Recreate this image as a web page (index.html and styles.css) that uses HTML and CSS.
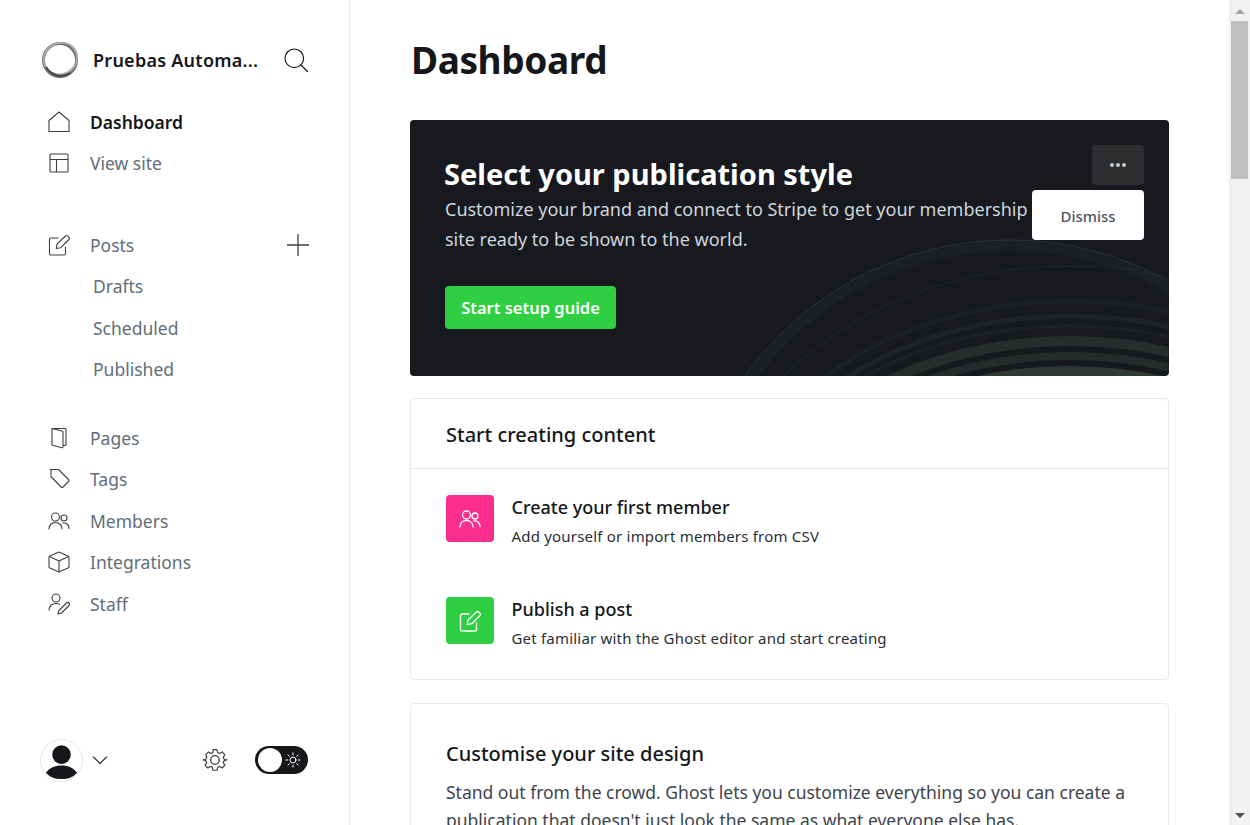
FILE: index.html
```html
<!DOCTYPE html>
<html lang="en">
<head>
<meta charset="utf-8">
<title>Dashboard</title>
<link rel="stylesheet" href="styles.css">
</head>
<body>
<div class="app">
  <aside class="sidebar">
    <div class="brand">
      <svg class="logo" viewBox="0 0 40 40" fill="none">
        <circle cx="20" cy="20" r="16.5" stroke="#6f6f6f" stroke-width="3"/>
        <ellipse cx="21" cy="19" rx="17" ry="15.5" stroke="#a9a9a9" stroke-width="2" transform="rotate(-30 20 20)"/>
        <path d="M6 27a17 17 0 0 0 24 6" stroke="#444" stroke-width="2"/>
      </svg>
      <span class="brand-name">Pruebas Automa...</span>
      <svg class="search" viewBox="0 0 24 24" fill="none" stroke="#15171a" stroke-width="1.2" stroke-linecap="round"><circle cx="10.3" cy="10.3" r="9.3"/><path d="M17 17l6.5 6.5"/></svg>
    </div>
    <nav class="nav">
      <a class="row active"><svg class="ico" viewBox="0 0 22 22" fill="none" stroke-linejoin="round"><path d="M1 20.5V9.5L11 1l10 8.5v11z"/></svg>Dashboard</a>
      <a class="row"><svg class="ico" viewBox="0 0 22 22" fill="none"><rect x="2" y="2" width="18" height="18" rx="1"/><path d="M2 7.5h18M8.5 7.5V20"/></svg>View site</a>
    </nav>
    <nav class="nav group">
      <a class="row"><svg class="ico" viewBox="0 0 22 22" fill="none" stroke-linecap="round" stroke-linejoin="round"><path d="M10 4H3a1.500 1.500 0 0 0-1.500 1.500v14A1.500 1.500 0 0 0 3 21h13a1.500 1.500 0 0 0 1.500-1.500V13"/><path d="M9 10l-.8 4.500 4.500-.8L21 5.500a1.500 1.500 0 0 0 0-2.200l-1.300-1.300a1.500 1.500 0 0 0-2.200 0z"/></svg>Posts
        <svg class="plus" viewBox="0 0 22 22" fill="none" stroke="#394047" stroke-width="1.300" stroke-linecap="round"><path d="M11 0v22M0 11h22"/></svg></a>
      <a class="row sub">Drafts</a>
      <a class="row sub">Scheduled</a>
      <a class="row sub">Published</a>
    </nav>
    <nav class="nav group">
      <a class="row"><svg class="ico" viewBox="0 0 22 22" fill="none" stroke-linejoin="round"><path d="M4 1.500h13a1 1 0 0 1 1 1v15a1 1 0 0 1-1 1h-2"/><path d="M4 1.500l10 2.500a1 1 0 0 1 1 1v15a.8.800 0 0 1-1 .7l-9.500-2.500a1 1 0 0 1-.5-1z"/></svg>Pages</a>
      <a class="row"><svg class="ico" viewBox="0 0 22 22" fill="none" stroke-linejoin="round"><path d="M2 2.500h8.500l10 10a1.500 1.500 0 0 1 0 2l-5.500 5.500a1.500 1.500 0 0 1-2 0l-10-10.500V4a1.500 1.500 0 0 1 1-1.500z" transform="translate(0 -1)"/></svg>Tags</a>
      <a class="row"><svg class="ico" viewBox="0 0 22 22" fill="none" stroke-linecap="round"><circle cx="7.500" cy="7" r="4"/><path d="M1 19c0-4 2.800-6.500 6.500-6.500S14 15 14 19"/><circle cx="16" cy="8" r="3"/><path d="M15 13c3.500-.5 6 2 6 5.500"/></svg>Members</a>
      <a class="row"><svg class="ico" viewBox="0 0 22 22" fill="none" stroke-linejoin="round"><path d="M11 1l9.500 4.200a1 1 0 0 1 .5 1v9.600a1 1 0 0 1-.5 1L11 21l-9.500-4.200a1 1 0 0 1-.5-1V6.200a1 1 0 0 1 .5-1z"/><path d="M1.500 5.500L11 10l9.500-4.500M11 10v11"/></svg>Integrations</a>
      <a class="row"><svg class="ico" viewBox="0 0 22 22" fill="none" stroke-linecap="round" stroke-linejoin="round"><circle cx="8" cy="5" r="4"/><path d="M1 17c0-4 3-6.500 7-6.500 1.500 0 2.500.3 3.500.8"/><path d="M10 21l1-3.500 7.500-7.500a1.400 1.400 0 0 1 2.500 2.500L13.500 20z"/></svg>Staff</a>
    </nav>
    <div class="foot">
      <span class="avatar"><svg viewBox="0 0 42 42"><circle cx="21" cy="15" r="9.500" fill="#15171a"/><path d="M5 33.500C9 28 14 26 21 26s12 2 16 7.500A20 20 0 0 1 21 40 20 20 0 0 1 5 33.500z" fill="#15171a"/></svg></span>
      <svg class="chev" viewBox="0 0 16 10" fill="none" stroke="#394047" stroke-width="1.300" stroke-linecap="round" stroke-linejoin="round"><path d="M1.500 2l6.500 6.500L14.500 2"/></svg>
      <svg class="gear" viewBox="0 0 26 26" fill="none" stroke="#394047" stroke-width="1.300" stroke-linejoin="round"><path d="M10.800 1.500h4.400l.7 3.300 2.300 1 2.800-1.800 3 3.200-1.800 2.700.9 2.300 3 .7v.1l-3 .7-.9 2.300 1.800 2.700-3 3.200-2.800-1.800-2.300 1-.7 3.300h-4.400l-.7-3.300-2.300-1-2.800 1.800-3-3.200 1.800-2.700-.9-2.300-3-.7v-.1l3-.7.9-2.300L2.700 7.200l3-3.200 2.800 1.800 2.300-1z" transform="translate(1.300 1.300) scale(.9)"/><circle cx="13" cy="13" r="4.300"/></svg>
      <span class="toggle"><span class="knob"></span>
        <svg class="sun" viewBox="0 0 16 16" fill="none" stroke="#fff" stroke-width="1" stroke-linecap="round"><circle cx="8" cy="8" r="3"/><path d="M8 .8v2M8 13.200v2M.8 8h2M13.200 8h2M2.900 2.900l1.400 1.400M11.700 11.700l1.400 1.400M2.900 13.100l1.400-1.400M11.700 4.300l1.400-1.400"/></svg></span>
    </div>
  </aside>
  <main class="main">
    <h1 class="title">Dashboard</h1>
    <section class="hero">
      <svg class="rings" viewBox="0 0 759 256" preserveAspectRatio="none" fill="none">
        <g stroke="#7fb27f">
          <circle cx="600" cy="446" r="326" stroke-opacity=".2" stroke-width="1"/>
          <circle cx="600" cy="446" r="320" stroke-opacity=".05" stroke-width="10"/>
          <ellipse cx="660" cy="446" rx="370" ry="300" stroke-opacity=".05" stroke-width="2"/>
          <ellipse cx="660" cy="446" rx="350" ry="265" stroke-opacity=".05" stroke-width="5"/>
          <ellipse cx="660" cy="446" rx="340" ry="250" stroke-opacity=".07" stroke-width="5"/>
          <ellipse cx="660" cy="446" rx="335" ry="240" stroke-opacity=".06" stroke-width="3"/>
          <ellipse cx="660" cy="446" rx="320" ry="225" stroke-opacity=".14" stroke-width="10"/>
          <ellipse cx="660" cy="446" rx="305" ry="210" stroke-opacity=".13" stroke-width="8"/>
          <ellipse cx="660" cy="446" rx="290" ry="195" stroke-opacity=".22" stroke-width="10"/>
          <ellipse cx="660" cy="446" rx="270" ry="180" stroke-opacity=".2" stroke-width="10"/>
        </g>
      </svg>
      <div class="hero-copy">
        <h2 class="hero-title">Select your publication style</h2>
        <p class="hero-text">Customize your brand and connect to Stripe to get your membership site ready to be shown to the world.</p>
        <a class="cta">Start setup guide</a>
      </div>
      <div class="hero-menu">
        <button class="dots"><i></i><i></i><i></i></button>
        <button class="dismiss">Dismiss</button>
      </div>
    </section>
    <section class="card first">
      <h3 class="card-head">Start creating content</h3>
      <div class="items">
        <div class="item">
          <span class="badge pink"><svg viewBox="0 0 22 22" fill="none" stroke="#fff" stroke-width="1.300" stroke-linecap="round"><circle cx="7.500" cy="7" r="4"/><path d="M1 19c0-4 2.800-6.500 6.500-6.500S14 15 14 19"/><circle cx="16" cy="8" r="3"/><path d="M15 13c3.500-.5 6 2 6 5.500"/></svg></span>
          <div><h4 class="item-title">Create your first member</h4><p class="item-text">Add yourself or import members from CSV</p></div>
        </div>
        <div class="item">
          <span class="badge green"><svg viewBox="0 0 22 22" fill="none" stroke="#fff" stroke-width="1.300" stroke-linecap="round" stroke-linejoin="round"><path d="M10 4H3a1.500 1.500 0 0 0-1.500 1.500v14A1.500 1.500 0 0 0 3 21h13a1.500 1.500 0 0 0 1.500-1.500V13"/><path d="M9 10l-.8 4.500 4.500-.8L21 5.500a1.500 1.500 0 0 0 0-2.200l-1.300-1.300a1.500 1.500 0 0 0-2.200 0z"/></svg></span>
          <div><h4 class="item-title">Publish a post</h4><p class="item-text">Get familiar with the Ghost editor and start creating</p></div>
        </div>
      </div>
    </section>
    <section class="card second">
      <h3 class="second-head">Customise your site design</h3>
      <p class="second-text">Stand out from the crowd. Ghost lets you customize everything so you can create a publication that doesn't just look the same as what everyone else has.</p>
    </section>
  </main>
  <div class="scrollbar">
    <span class="arrow up"></span>
    <span class="thumb"></span>
    <span class="arrow down"></span>
  </div>
</div>
</body>
</html>
```
FILE: styles.css
```css
* { box-sizing: border-box; }
html, body { margin: 0; height: 100%; overflow: hidden; background: #fff; }
body { font-family: "Noto Sans", "Open Sans", "Liberation Sans", sans-serif; color: #15171a; }
h1, h2, h3, h4, p { margin: 0; }
a { display: block; }

.app { display: flex; height: 825px; width: 1250px; overflow: hidden; }

.sidebar { flex: 0 0 350px; border-right: 1px solid #e6e9eb; height: 825px; padding: 40px 40px 0 48px; display: flex; flex-direction: column; }
.brand { display: flex; align-items: center; height: 40px; margin-left: -8px; }
.logo { width: 40px; height: 40px; flex: none; }
.brand-name { font-size: 18px; font-weight: 600; margin-left: 13px; letter-spacing: .25px; white-space: nowrap; width: 191px; }
.search { width: 24px; height: 24px; flex: none; }

.nav { margin-top: 0; }
.nav:first-of-type { margin-top: 21px; }
.group { margin-top: 40px; }
.group + .group { margin-top: 27px; }
.row { display: flex; align-items: center; height: 41.5px; font-size: 17.5px; color: #626d79; position: relative; }
.row.active { color: #15171a; font-weight: 600; }
.ico { width: 22px; height: 22px; margin-right: 20px; flex: none; stroke: #394047; stroke-width: 1.1; }
.row.sub { padding-left: 45px; }
.plus { width: 22px; height: 22px; margin-left: auto; margin-right: 0; }

.foot { margin-top: auto; margin-bottom: 43px; margin-left: -8px; display: flex; align-items: center; height: 44px; }
.avatar { width: 43px; height: 43px; border-radius: 50%; border: 1px solid #e6e9eb; overflow: hidden; flex: none; display: block; }
.avatar svg { display: block; width: 41px; height: 41px; }
.chev { width: 16px; height: 10px; margin-left: 9px; flex: none; }
.gear { width: 26px; height: 26px; margin-left: 94px; flex: none; }
.toggle { width: 53px; height: 28px; margin-left: 27px; border-radius: 14px; background: #15171a; display: flex; align-items: center; padding: 0 3px; flex: none; }
.knob { width: 24px; height: 24px; border-radius: 50%; background: #fff; flex: none; }
.sun { width: 16px; height: 16px; margin-left: 3px; flex: none; }

.main { flex: 0 0 879px; height: 825px; overflow: hidden; padding: 0 60px; }
.title { font-size: 37px; font-weight: 700; line-height: 50px; height: 120px; padding-top: 35px; margin-left: 1px; letter-spacing: -.4px; }

.hero { position: relative; height: 256px; border-radius: 4px; background: #17191e; overflow: hidden; padding: 34px 35px; }
.rings { position: absolute; inset: 0; width: 100%; height: 100%; }
.hero-copy { position: relative; }
.hero-title { font-size: 29px; font-weight: 700; line-height: 40px; color: #fff; margin-left: -1px; }
.hero-text { font-size: 18px; line-height: 30px; color: #cfd6dd; width: 600px; margin-top: 0; }
.cta { display: inline-block; margin-top: 32px; width: 171px; height: 43px; line-height: 43px; text-align: center; background: #30cf43; color: #fff; font-weight: 600; font-size: 16.500px; border-radius: 4px; }
.hero-menu { position: absolute; top: 25px; right: 25px; display: flex; flex-direction: column; align-items: flex-end; gap: 5px; }
.dots { width: 52px; height: 40px; border: 0; border-radius: 4px; background: #2c2d2f; display: flex; align-items: center; justify-content: center; gap: 2px; padding: 0; }
.dots i { width: 4px; height: 4px; border-radius: 50%; background: #c5c9cd; display: block; }
.dismiss { width: 112px; height: 50px; border: 0; border-radius: 4px; background: #fff; color: #4d5660; font: 500 15px "Noto Sans", sans-serif; padding: 2px 0 0; }

.card { border: 1px solid #e6e9eb; border-radius: 4px; }
.first { margin-top: 22px; height: 282px; }
.card-head { font-size: 20px; font-weight: 500; height: 70px; line-height: 72px; padding-left: 35px; border-bottom: 1px solid #e6e9eb; }
.items { padding: 26px 35px 0; display: flex; flex-direction: column; gap: 55px; }
.item { display: flex; gap: 17.500px; height: 47px; }
.badge { width: 48px; height: 47px; border-radius: 4px; display: flex; align-items: center; justify-content: center; flex: none; }
.badge svg { width: 22px; height: 22px; }
.pink { background: #fb2d8d; }
.green { background: #30cf43; }
.item-title { font-size: 18px; font-weight: 500; line-height: 24px; }
.item-text { font-size: 15px; line-height: 22px; margin-top: 6px; color: #2a2f35; letter-spacing: .2px; }

.second { margin-top: 23px; height: 200px; padding: 33px 35px; }
.second-head { font-size: 20px; font-weight: 500; line-height: 34px; }
.second-text { font-size: 17.500px; line-height: 28px; margin-top: 7px; color: #3d444c; }

.scrollbar { flex: 0 0 21px; height: 825px; background: #f1f1f1; display: flex; flex-direction: column; align-items: center; position: relative; }
.arrow { width: 0; height: 0; border-left: 5px solid transparent; border-right: 5px solid transparent; display: block; }
.up { border-bottom: 5px solid #a3a3a3; margin: 9px 0 7px; }
.thumb { width: 17px; height: 158px; background: #c1c1c1; display: block; }
.down { border-top: 5px solid #505050; margin-top: auto; margin-bottom: 7px; }
```
